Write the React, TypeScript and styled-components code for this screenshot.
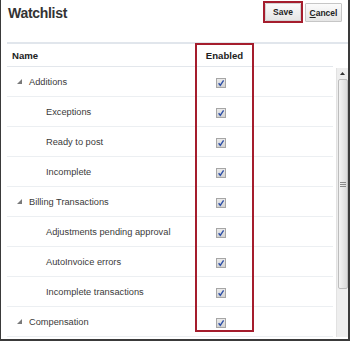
import React from "react";
import styled, { createGlobalStyle } from "styled-components";

const Global = createGlobalStyle`
  html, body {
    margin: 0;
    padding: 0;
    background: #fff;
  }
`;

const Frame = styled.div`
  position: relative;
  width: 350px;
  height: 341px;
  box-sizing: border-box;
  display: flex;
  flex-direction: column;
  overflow: hidden;
  background: #fff;
  border-left: 1px solid #3a3a3a;
  border-right: 2px solid #3a3a3a;
  border-bottom: 2px solid #3a3a3a;
  font-family: "Liberation Sans", Arial, sans-serif;
  color: #333;
`;

const TopBar = styled.div`
  height: 42px;
  display: flex;
  justify-content: space-between;
  align-items: flex-start;
  padding: 0 6px 0 7px;
  box-sizing: border-box;
`;

const Title = styled.h1`
  margin: 5px 0 0;
  font-size: 14px;
  line-height: 16px;
  font-weight: 700;
  letter-spacing: -0.3px;
  color: #333;
`;

const Buttons = styled.div`
  display: flex;
  align-items: flex-start;
  gap: 2px;
  padding-top: 1px;
`;

const Highlight = styled.div`
  width: 40px;
  height: 22px;
  box-sizing: border-box;
  border: 2px solid #a51d2d;
  display: flex;
`;

const Button = styled.button<{ $w?: number }>`
  width: ${(p) => (p.$w ? `${p.$w}px` : "100%")};
  height: ${(p) => (p.$w ? "19px" : "100%")};
  margin-top: ${(p) => (p.$w ? "2px" : "0")};
  padding: 0;
  box-sizing: border-box;
  border: 1px solid ${(p) => (p.$w ? "#c6c6c6" : "#d2d2d2")};
  border-radius: 1px;
  background: linear-gradient(#fbfbfb, #e6e6e6);
  font-family: "Liberation Sans", Arial, sans-serif;
  font-size: 8.5px;
  font-weight: 700;
  color: #222;
  u {
    text-decoration: underline;
  }
`;

const Grid = styled.div`
  margin-left: 6px;
  border-top: 2px solid #e1e6ec;
  flex: 1;
  display: flex;
  flex-direction: column;
`;

const HeaderRow = styled.div`
  width: 326px;
  height: 23px;
  box-sizing: border-box;
  display: flex;
  align-items: center;
  border-bottom: 1px solid #e3e7ec;
`;

const HeadCell = styled.div<{ $w: number; $center?: boolean }>`
  width: ${(p) => p.$w}px;
  box-sizing: border-box;
  padding-left: ${(p) => (p.$center ? 0 : 5)}px;
  text-align: ${(p) => (p.$center ? "center" : "left")};
  font-size: 9.6px;
  font-weight: 700;
  color: #222;
`;

const Body = styled.div`
  display: flex;
  flex: 1;
`;

const Rows = styled.div`
  width: 326px;
`;

const Row = styled.div`
  height: 30px;
  box-sizing: border-box;
  display: flex;
  align-items: center;
  border-bottom: 1px solid #eceff2;
`;

const NameCell = styled.div<{ $child?: boolean }>`
  width: 188px;
  box-sizing: border-box;
  padding-left: ${(p) => (p.$child ? 39 : 10)}px;
  display: flex;
  align-items: center;
  gap: 7px;
  font-size: 9.25px;
  color: #3a3a3a;
`;

const CheckCell = styled.div`
  width: 59px;
  box-sizing: border-box;
  padding-right: 7px;
  padding-top: 2px;
  display: flex;
  justify-content: center;
`;

const Scrollbar = styled.div`
  width: 12px;
  height: 269px;
  margin: 1px 0 0 3px;
  box-sizing: border-box;
  background: #eeeeee;
  border-left: 1px solid #e2e2e2;
  display: flex;
  flex-direction: column;
  align-items: center;
`;

const UpArrow = styled.div`
  height: 11px;
  display: flex;
  align-items: center;
  justify-content: center;
`;

const Thumb = styled.div`
  width: 10px;
  height: 210px;
  box-sizing: border-box;
  border: 1px solid #bdbdbd;
  border-radius: 2px;
  background: linear-gradient(90deg, #f4f4f4, #dadada);
  display: flex;
  align-items: center;
  justify-content: center;
`;

const Callout = styled.div`
  position: absolute;
  left: 194px;
  top: 43px;
  width: 59px;
  height: 289px;
  box-sizing: border-box;
  border: 2px solid #a51d2d;
  pointer-events: none;
`;

const Expander = () => (
  <svg width="5" height="5" viewBox="0 0 5 5">
    <polygon points="5,0 5,5 0,5" fill="#7a7a7a" />
  </svg>
);

const Check = () => (
  <svg width="10" height="10" viewBox="0 0 10 10">
    <defs>
      <linearGradient id="cb" x1="0" y1="0" x2="0" y2="1">
        <stop offset="0" stopColor="#ececec" />
        <stop offset="1" stopColor="#d0d0d0" />
      </linearGradient>
    </defs>
    <rect x="0.5" y="0.5" width="9" height="9" fill="url(#cb)" stroke="#a6a6a6" />
    <path d="M2.6 5.3 L4.3 7.3 L7.6 2.3" fill="none" stroke="#2d4fa6" strokeWidth="1.4" />
  </svg>
);

const items = [
  { name: "Additions", parent: true },
  { name: "Exceptions" },
  { name: "Ready to post" },
  { name: "Incomplete" },
  { name: "Billing Transactions", parent: true },
  { name: "Adjustments pending approval" },
  { name: "AutoInvoice errors" },
  { name: "Incomplete transactions" },
  { name: "Compensation", parent: true },
];

export default function App() {
  return (
    <>
      <Global />
      <Frame>
        <TopBar>
          <Title>Watchlist</Title>
          <Buttons>
            <Highlight>
              <Button>Save</Button>
            </Highlight>
            <Button $w={37}>
              <u>C</u>ancel
            </Button>
          </Buttons>
        </TopBar>
        <Grid>
          <HeaderRow>
            <HeadCell $w={188}>Name</HeadCell>
            <HeadCell $w={59} $center>
              Enabled
            </HeadCell>
          </HeaderRow>
          <Body>
            <Rows>
              {items.map((it) => (
                <Row key={it.name}>
                  <NameCell $child={!it.parent}>
                    {it.parent && <Expander />}
                    {it.name}
                  </NameCell>
                  <CheckCell>
                    <Check />
                  </CheckCell>
                </Row>
              ))}
            </Rows>
            <Scrollbar>
              <UpArrow>
                <svg width="5" height="3" viewBox="0 0 5 3">
                  <polygon points="2.5,0 5,3 0,3" fill="#333" />
                </svg>
              </UpArrow>
              <Thumb>
                <svg width="6" height="5" viewBox="0 0 6 5">
                  <path d="M0 0.5 H6 M0 2.5 H6 M0 4.5 H6" stroke="#8a8a8a" strokeWidth="1" />
                </svg>
              </Thumb>
            </Scrollbar>
          </Body>
        </Grid>
        <Callout />
      </Frame>
    </>
  );
}
